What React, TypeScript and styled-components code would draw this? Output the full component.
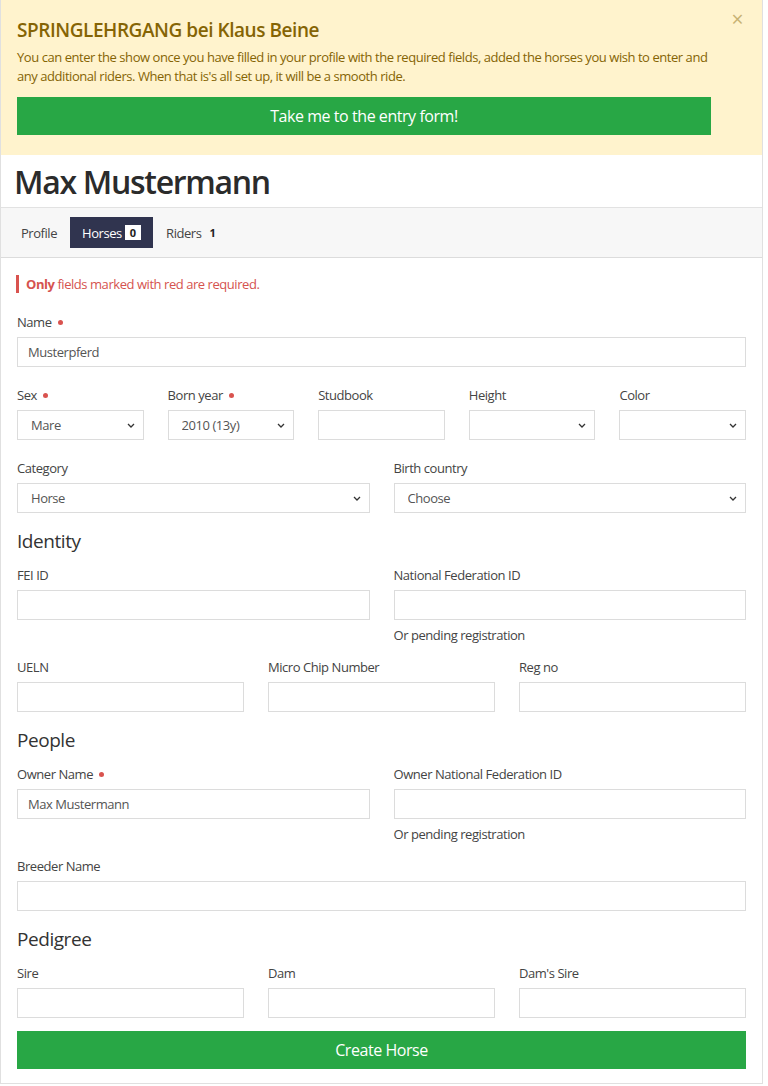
import React from "react";
import styled, { createGlobalStyle } from "styled-components";

const GlobalStyle = createGlobalStyle`
  html, body { margin: 0; padding: 0; background: #fff; }
  body {
    font-family: "Open Sans", "Noto Sans", sans-serif;
    font-stretch: 88%;
    letter-spacing: -0.028em;
    color: #444;
  }
  * { box-sizing: border-box; }
  input, select, button { font-family: inherit; font-stretch: inherit; letter-spacing: inherit; }
`;

const Card = styled.div`
  width: 763px;
  border: 1px solid #e0e0e0;
  border-top: none;
`;

const Alert = styled.div`
  position: relative;
  background: #fff3cd;
  padding: 18px 51px 20px 16px;
  color: #856404;
`;

const AlertTitle = styled.h4`
  margin: 0;
  font-size: 19px;
  line-height: 24px;
  font-weight: 600;
  color: #856404;
`;

const AlertText = styled.p`
  margin: 6px 0 0;
  font-size: 13px;
  line-height: 19px;
`;

const Close = styled.button`
  position: absolute;
  top: 9px;
  right: 19px;
  border: none;
  background: transparent;
  padding: 0;
  font-size: 21px;
  line-height: 20px;
  font-weight: 400;
  color: #856404;
  opacity: 0.45;
  cursor: pointer;
`;

const GreenButton = styled.button<{ $mt?: number }>`
  display: block;
  width: 100%;
  height: 38px;
  margin-top: ${(p) => p.$mt ?? 0}px;
  border: none;
  border-radius: 0;
  background: #28a745;
  color: #fff;
  font-size: 16px;
  cursor: pointer;
`;

const Header = styled.div`
  padding: 8px 13px 6px;
`;

const Name = styled.h1`
  margin: 0;
  font-size: 32px;
  line-height: 38px;
  font-weight: 600;
  letter-spacing: -1.3px;
  color: #2b2b2b;
`;

const TabBar = styled.nav`
  display: flex;
  gap: 1px;
  padding: 9px 8px;
  background: #f7f7f7;
  border-top: 1px solid #e2e2e2;
  border-bottom: 1px solid #dcdcdc;
`;

const Tab = styled.a<{ $active?: boolean }>`
  display: flex;
  align-items: center;
  height: 31px;
  padding: 0 12px;
  font-size: 13px;
  color: ${(p) => (p.$active ? "#fff" : "#444")};
  background: ${(p) => (p.$active ? "#30344f" : "transparent")};
  text-decoration: none;
  cursor: pointer;
`;

const Badge = styled.span<{ $light?: boolean }>`
  margin-left: 3px;
  height: 15px;
  line-height: 15px;
  padding: 0 5px;
  font-size: 11px;
  font-weight: 700;
  letter-spacing: 0;
  color: #222;
  background: ${(p) => (p.$light ? "#fff" : "transparent")};
`;

const Form = styled.form`
  padding: 17px 16px 14px;
`;

const Note = styled.div`
  margin: 0 0 20px -1px;
  padding-left: 7px;
  border-left: 3px solid #d9534f;
  font-size: 13px;
  line-height: 18px;
  color: #d5534f;
  b { font-weight: 700; }
`;

const Row = styled.div<{ $cols: number }>`
  display: grid;
  grid-template-columns: repeat(${(p) => p.$cols}, 1fr);
  column-gap: 24px;
`;

const Field = styled.div<{ $mb?: number }>`
  margin-bottom: ${(p) => p.$mb ?? 19}px;
`;

const Label = styled.label`
  display: flex;
  align-items: center;
  font-size: 13px;
  line-height: 19px;
  color: #444;
  margin-bottom: 5px;
`;

const Req = styled.span`
  display: inline-block;
  width: 5px;
  height: 5px;
  margin-left: 6px;
  border-radius: 50%;
  background: #d9534f;
`;

const Input = styled.input`
  display: block;
  width: 100%;
  height: 30px;
  padding: 0 10px;
  border: 1px solid #dcdcdc;
  border-radius: 0;
  background: #fff;
  font-size: 13px;
  color: #555;
  outline: none;
`;

const SelectWrap = styled.div`
  position: relative;
`;

const Select = styled.select`
  display: block;
  width: 100%;
  height: 30px;
  padding: 0 24px 0 13px;
  border: 1px solid #dcdcdc;
  border-radius: 0;
  background: #fff;
  font-size: 13px;
  color: #555;
  appearance: none;
  -webkit-appearance: none;
  outline: none;
`;

const Chevron = styled.svg`
  position: absolute;
  right: 9px;
  top: 13px;
  pointer-events: none;
`;

const Help = styled.div`
  margin: 6px 0 -6px;
  font-size: 13px;
  line-height: 19px;
  color: #444;
`;

const Section = styled.h3`
  margin: -1px 0 15px;
  font-size: 19px;
  line-height: 20px;
  font-weight: 400;
  color: #333;
`;

const Drop: React.FC<{ value?: string }> = ({ value = "" }) => (
  <SelectWrap>
    <Select defaultValue={value}>
      <option value={value}>{value}</option>
    </Select>
    <Chevron width="8" height="5" viewBox="0 0 8 5">
      <path d="M1 1 L4 4 L7 1" fill="none" stroke="#333" strokeWidth="1.3" />
    </Chevron>
  </SelectWrap>
);

const F: React.FC<{
  label: string;
  req?: boolean;
  children: React.ReactNode;
  help?: string;
  mb?: number;
}> = ({ label, req, children, help, mb }) => (
  <Field $mb={mb}>
    <Label>
      {label}
      {req && <Req />}
    </Label>
    {children}
    {help && <Help>{help}</Help>}
  </Field>
);

export default function App() {
  return (
    <>
      <GlobalStyle />
      <Card>
        <Alert>
          <Close aria-label="close">×</Close>
          <AlertTitle>SPRINGLEHRGANG bei Klaus Beine</AlertTitle>
          <AlertText>
            You can enter the show once you have filled in your profile with the required fields, added the
            horses you wish to enter and any additional riders. When that is's all set up, it will be a smooth
            ride.
          </AlertText>
          <GreenButton $mt={11} type="button">Take me to the entry form!</GreenButton>
        </Alert>
        <Header>
          <Name>Max Mustermann</Name>
        </Header>
        <TabBar>
          <Tab>Profile</Tab>
          <Tab $active>
            Horses<Badge $light>0</Badge>
          </Tab>
          <Tab>
            Riders<Badge>1</Badge>
          </Tab>
        </TabBar>
        <Form onSubmit={(e) => e.preventDefault()}>
          <Note>
            <b>Only</b> fields marked with red are required.
          </Note>
          <F label="Name" req>
            <Input defaultValue="Musterpferd" />
          </F>
          <Row $cols={5}>
            <F label="Sex" req>
              <Drop value="Mare" />
            </F>
            <F label="Born year" req>
              <Drop value="2010 (13y)" />
            </F>
            <F label="Studbook">
              <Input />
            </F>
            <F label="Height">
              <Drop />
            </F>
            <F label="Color">
              <Drop />
            </F>
          </Row>
          <Row $cols={2}>
            <F label="Category">
              <Drop value="Horse" />
            </F>
            <F label="Birth country">
              <Drop value="Choose" />
            </F>
          </Row>
          <Section>Identity</Section>
          <Row $cols={2}>
            <F label="FEI ID">
              <Input />
            </F>
            <F label="National Federation ID" help="Or pending registration">
              <Input />
            </F>
          </Row>
          <Row $cols={3}>
            <F label="UELN">
              <Input />
            </F>
            <F label="Micro Chip Number">
              <Input />
            </F>
            <F label="Reg no">
              <Input />
            </F>
          </Row>
          <Section>People</Section>
          <Row $cols={2}>
            <F label="Owner Name" req>
              <Input defaultValue="Max Mustermann" />
            </F>
            <F label="Owner National Federation ID" help="Or pending registration">
              <Input />
            </F>
          </Row>
          <F label="Breeder Name">
            <Input />
          </F>
          <Section>Pedigree</Section>
          <Row $cols={3}>
            <F label="Sire" mb={13}>
              <Input />
            </F>
            <F label="Dam" mb={13}>
              <Input />
            </F>
            <F label="Dam's Sire" mb={13}>
              <Input />
            </F>
          </Row>
          <GreenButton type="submit">Create Horse</GreenButton>
        </Form>
      </Card>
    </>
  );
}
